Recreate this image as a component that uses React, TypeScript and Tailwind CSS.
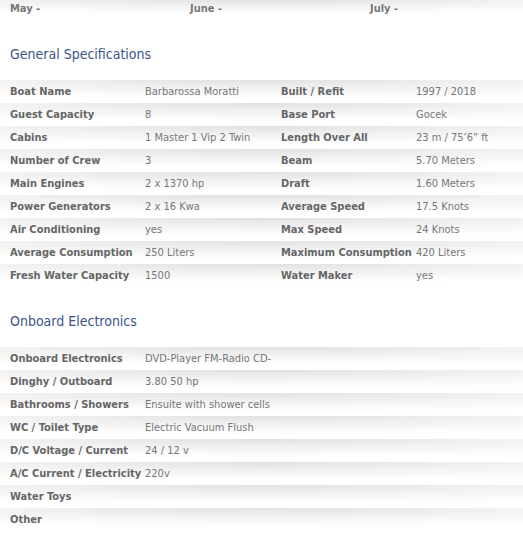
import React from 'react'

const general: [string, string, string, string][] = [
  ['Boat Name', 'Barbarossa Moratti', 'Built / Refit', '1997 / 2018'],
  ['Guest Capacity', '8', 'Base Port', 'Gocek'],
  ['Cabins', '1 Master 1 Vip 2 Twin', 'Length Over All', '23 m / 75\u20196\u201d ft'],
  ['Number of Crew', '3', 'Beam', '5.70 Meters'],
  ['Main Engines', '2 x 1370 hp', 'Draft', '1.60 Meters'],
  ['Power Generators', '2 x 16 Kwa', 'Average Speed', '17.5 Knots'],
  ['Air Conditioning', 'yes', 'Max Speed', '24 Knots'],
  ['Average Consumption', '250 Liters', 'Maximum Consumption', '420 Liters'],
  ['Fresh Water Capacity', '1500', 'Water Maker', 'yes'],
]

const electronics: [string, string][] = [
  ['Onboard Electronics', 'DVD-Player FM-Radio CD-'],
  ['Dinghy / Outboard', '3.80 50 hp'],
  ['Bathrooms / Showers', 'Ensuite with shower cells'],
  ['WC / Toilet Type', 'Electric Vacuum Flush'],
  ['D/C Voltage / Current', '24 / 12 v'],
  ['A/C Current / Electricity', '220v'],
  ['Water Toys', ''],
  ['Other', ''],
]

// shared row shading: grey at the top edge, fading out to white
const rowBg =
  'bg-[radial-gradient(130%_100%_at_50%_0%,#e1e1e1_0%,#f3f3f3_40%,#ffffff_80%)]'

function Label({ children }: { children: React.ReactNode }) {
  return (
    <div className="min-w-[135px] shrink-0 whitespace-nowrap font-bold text-[#666666]">{children}</div>
  )
}

function Value({ children }: { children: React.ReactNode }) {
  return <div className="whitespace-nowrap text-[#777777]">{children}</div>
}

export default function App() {
  return (
    <div
      className="w-[523px] h-[537px] overflow-hidden bg-white text-[11px] leading-[23px]"
      style={{ fontFamily: '"DejaVu Sans", Verdana, sans-serif', fontStretch: 'condensed' }}
    >
      {/* Months */}
      <div className={`flex h-[17px] items-center pl-[10px] font-bold text-[#777777] leading-[17px] ${rowBg}`}>
        <div className="w-[180px]">May -</div>
        <div className="w-[180px]">June -</div>
        <div>July -</div>
      </div>

      <h2 className="pl-[10px] pt-[27px] pb-[16px] text-[14px] leading-[20px] text-[#3b5487]">
        General Specifications
      </h2>

      <div>
        {general.map(([l1, v1, l2, v2]) => (
          <div key={l1} className={`flex h-[23px] pl-[10px] ${rowBg}`}>
            <Label>{l1}</Label>
            <div className="w-[136px] shrink-0">
              <Value>{v1}</Value>
            </div>
            <Label>{l2}</Label>
            <Value>{v2}</Value>
          </div>
        ))}
      </div>

      <h2 className="pl-[10px] pt-[24px] pb-[16px] text-[14px] leading-[20px] text-[#3b5487]">
        Onboard Electronics
      </h2>

      <div>
        {electronics.map(([l, v]) => (
          <div key={l} className={`flex h-[23px] pl-[10px] ${rowBg}`}>
            <Label>{l}</Label>
            <Value>{v}</Value>
          </div>
        ))}
      </div>
    </div>
  )
}
